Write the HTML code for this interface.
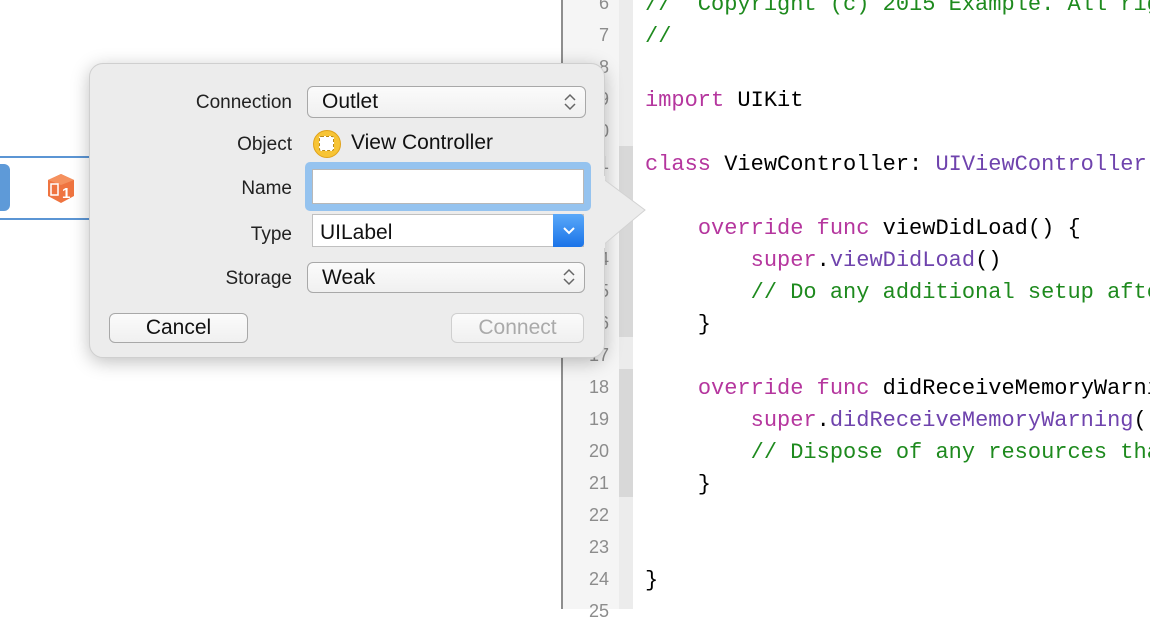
<!DOCTYPE html>
<html><head><style>
body{margin:0;width:1150px;height:609px;overflow:hidden;background:#fff;position:relative;font-family:"Liberation Sans",sans-serif}
.abs{position:absolute}
#gutter{left:563px;top:0;width:56px;height:609px;background:#f5f5f5}
#strip{left:619px;top:0;width:14px;height:609px;background:#ececec}
.num{position:absolute;left:559px;width:50px;text-align:right;font-size:18px;color:#8c8c8c;line-height:32px;font-family:"Liberation Sans",sans-serif}
#codewrap{position:absolute;left:645px;top:0;width:505px;height:609px;overflow:hidden}
.code{position:absolute;left:0;font-family:"Liberation Mono",monospace;font-size:22px;line-height:32px;white-space:pre;color:#000}
.k{color:#b5369e}.c{color:#1e8a1e}.t{color:#6f43ad}
.lbl{position:absolute;right:858px;font-size:19px;color:#222;text-align:right}
.pop{position:absolute;border:1px solid #a8a8a8;border-radius:6px;background:linear-gradient(#fbfbfb,#f0f0f0);font-size:21px;color:#111;box-sizing:border-box}
</style></head><body>
<div class="abs" style="left:561px;top:0;width:2px;height:609px;background:#8e8e8e"></div>
<div class="abs" id="gutter"></div>
<div class="abs" id="strip"></div>
<div class="abs" style="left:619px;top:146px;width:14px;height:191px;background:#d8d8d8"></div>
<div class="abs" style="left:619px;top:369px;width:14px;height:128px;background:#d8d8d8"></div>

<div class="num" style="top:-13px">6</div>
<div class="num" style="top:19px">7</div>
<div class="num" style="top:51px">8</div>
<div class="num" style="top:83px">9</div>
<div class="num" style="top:115px">10</div>
<div class="num" style="top:147px">11</div>
<div class="num" style="top:243px">14</div>
<div class="num" style="top:275px">15</div>
<div class="num" style="top:307px">16</div>
<div class="num" style="top:339px">17</div>
<div class="num" style="top:371px">18</div>
<div class="num" style="top:403px">19</div>
<div class="num" style="top:435px">20</div>
<div class="num" style="top:467px">21</div>
<div class="num" style="top:499px">22</div>
<div class="num" style="top:531px">23</div>
<div class="num" style="top:563px">24</div>
<div class="num" style="top:595px">25</div>

<div id="codewrap"><div class="code" style="top:-11px"><span class="c">//  Copyright (c) 2015 Example. All rights reserved.</span>
<span class="c">//</span>

<span class="k">import</span> UIKit

<span class="k">class</span> ViewController: <span class="t">UIViewController</span> {

    <span class="k">override func</span> viewDidLoad() {
        <span class="k">super</span>.<span class="t">viewDidLoad</span>()
        <span class="c">// Do any additional setup after loading the view.</span>
    }

    <span class="k">override func</span> didReceiveMemoryWarning() {
        <span class="k">super</span>.<span class="t">didReceiveMemoryWarning</span>()
        <span class="c">// Dispose of any resources that can be recreated.</span>
    }


}</div></div>

<!-- left canvas -->
<div class="abs" style="left:0;top:156px;width:100px;height:2px;background:#5b95d4"></div>
<div class="abs" style="left:0;top:218px;width:100px;height:2px;background:#5b95d4"></div>
<div class="abs" style="left:-8px;top:164px;width:18px;height:47px;border-radius:6px;background:#5e9ad8"></div>
<svg class="abs" style="left:45px;top:172px" width="32" height="32" viewBox="0 0 32 32">
<polygon points="3,8 16,2 29,8 29,24 16,31 3,24" fill="#ef7440"/>
<polygon points="3,8 16,2 29,8 16,13" fill="#f5915e"/>
<rect x="6" y="12" width="7" height="11" fill="none" stroke="#fff" stroke-width="1.5"/>
<text x="17" y="26" font-size="15" font-weight="bold" fill="#fff" font-family="Liberation Sans">1</text>
</svg>

<!-- popover -->
<div class="abs" style="left:89px;top:63px;width:516px;height:295px;border-radius:14px;background:#ececec;border:1px solid #cfcfcf;box-sizing:border-box;box-shadow:0 4px 18px rgba(0,0,0,.25)"></div>
<svg class="abs" style="left:602px;top:176px" width="46" height="72"><polygon points="0,2 43,34 0,70" fill="#ececec" stroke="#d2d2d2"/><rect x="0" y="0" width="3" height="72" fill="#ececec"/></svg>

<div class="lbl" style="top:92px">Connection</div>
<div class="lbl" style="top:134px">Object</div>
<div class="lbl" style="top:178px">Name</div>
<div class="lbl" style="top:224px">Type</div>
<div class="lbl" style="top:268px">Storage</div>

<div class="pop" style="left:307px;top:86px;width:279px;height:32px;padding:3px 14px">Outlet</div>
<svg class="abs" style="left:561px;top:90px" width="18" height="24"><path d="M4 10 L9 5 L14 10 M4 14 L9 19 L14 14" fill="none" stroke="#666" stroke-width="1.5"/></svg>

<div class="abs" style="left:313px;top:130px;width:28px;height:28px;border-radius:50%;background:#f7c435;border:1px solid #e0a21a;box-sizing:border-box"></div>
<div class="abs" style="left:319px;top:136px;width:15px;height:15px;background:#fff;border:1px dashed #b98a1a;box-sizing:border-box;border-radius:2px"></div>
<div class="abs" style="left:351px;top:131px;font-size:21px;color:#111">View Controller</div>

<div class="abs" style="left:305px;top:162px;width:286px;height:49px;border-radius:5px;background:#95c3ef"></div>
<div class="abs" style="left:312px;top:169px;width:272px;height:35px;background:#fff;border:1px solid #b8b8b8;box-sizing:border-box"></div>

<div class="abs" style="left:312px;top:214px;width:272px;height:33px;background:#fff;border:1px solid #c0c0c0;box-sizing:border-box;font-size:21px;padding:6px 7px;color:#111">UILabel</div>
<div class="abs" style="left:553px;top:214px;width:31px;height:33px;background:linear-gradient(#5aa9f9,#1a73e8);border-radius:0 4px 4px 0"></div>
<svg class="abs" style="left:560px;top:224px" width="18" height="14"><path d="M4 4 L9 9 L14 4" fill="none" stroke="#fff" stroke-width="2"/></svg>

<div class="pop" style="left:307px;top:262px;width:278px;height:31px;padding:3px 14px">Weak</div>
<svg class="abs" style="left:560px;top:265px" width="18" height="24"><path d="M4 10 L9 5 L14 10 M4 14 L9 19 L14 14" fill="none" stroke="#666" stroke-width="1.5"/></svg>

<div class="pop" style="left:109px;top:313px;width:139px;height:30px;text-align:center;padding-top:2px">Cancel</div>
<div class="pop" style="left:451px;top:313px;width:133px;height:30px;text-align:center;padding-top:2px;color:#aaa;border-color:#cfcfcf">Connect</div>
</body></html>
